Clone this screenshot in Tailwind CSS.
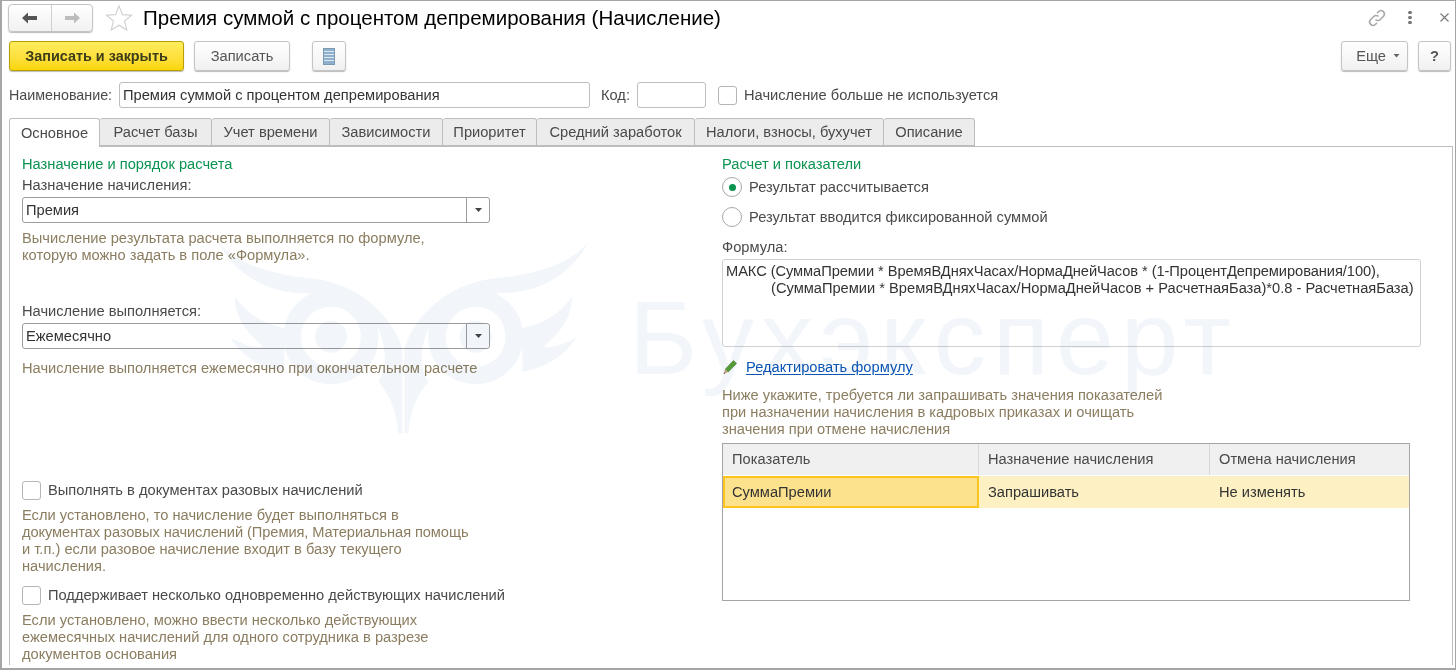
<!DOCTYPE html>
<html lang="ru">
<head>
<meta charset="utf-8">
<script src="https://cdn.jsdelivr.net/npm/@tailwindcss/browser@4"></script>
<title>Премия</title>
</head>
<body class="m-0 bg-white">
<div class="relative w-[1456px] h-[670px] overflow-hidden bg-white border border-l-2 border-b-2 border-[#a5a5a5] font-['Liberation_Sans',Arial,sans-serif] text-[14.67px] leading-[17px] text-[#333]">

  <!-- title bar -->
  <div class="flex items-center h-[33px]">
    <div class="flex ml-[6px] w-[85px] h-[28px] rounded-[4px] border border-[#c4c4c4] bg-gradient-to-b from-white to-[#f1f1f1] shadow-[0_1px_1px_#bbb]">
      <div class="w-[43px] flex items-center justify-center border-r border-[#d0d0d0]">
        <svg width="16" height="12" viewBox="0 0 16 12"><path d="M0 6 L6 0.5 V4 H15 V8 H6 V11.5 Z" fill="#555"/></svg>
      </div>
      <div class="flex-1 flex items-center justify-center">
        <svg width="16" height="12" viewBox="0 0 16 12"><path d="M16 6 L10 0.5 V4 H1 V8 H10 V11.5 Z" fill="#bdbdbd"/></svg>
      </div>
    </div>
    <svg class="ml-[12px]" width="28" height="28" viewBox="0 0 28 28"><path d="M14 2 L17.5 10.6 L26.5 11.2 L19.6 17 L21.8 26 L14 21.2 L6.2 26 L8.4 17 L1.5 11.2 L10.5 10.6 Z" fill="#fff" stroke="#d0d0d0" stroke-width="1.1"/></svg>
    <div class="ml-[10px] text-[20.5px] leading-[24px] text-black whitespace-nowrap">Премия суммой с процентом депремирования (Начисление)</div>
    <div class="ml-auto flex items-center">
      <svg width="20" height="20" viewBox="0 0 20 20" fill="none" stroke="#a8a8a8" stroke-width="1.6"><path d="M8.5 11.5 a3.4 3.4 0 0 0 4.8 0 l3.2-3.2 a3.4 3.4 0 0 0-4.8-4.8 l-1.6 1.6"/><path d="M11.5 8.5 a3.4 3.4 0 0 0-4.8 0 l-3.2 3.2 a3.4 3.4 0 0 0 4.8 4.8 l1.6-1.6"/></svg>
      <div class="ml-[21px] flex flex-col gap-[2px]"><span class="block w-[4px] h-[3px] rounded-full bg-[#777]"></span><span class="block w-[4px] h-[3px] rounded-full bg-[#777]"></span><span class="block w-[4px] h-[3px] rounded-full bg-[#777]"></span></div>
      <svg class="ml-[28px] mr-[6px]" width="9" height="9" viewBox="0 0 9 9" stroke="#777" stroke-width="1.1"><path d="M0.5 0.5 L8.5 8.5 M8.5 0.5 L0.5 8.5"/></svg>
    </div>
  </div>

  <!-- command bar -->
  <div class="flex items-start h-[30px] mt-[7px] pl-[7px] pr-[4px]">
    <div class="w-[175px] h-[30px] rounded-[3px] border border-[#b9a000] bg-gradient-to-b from-[#ffec5c] to-[#fbd600] shadow-[0_1px_1px_#bbb] flex items-center justify-center font-bold text-[14.4px] text-[#3d3d1a]">Записать и закрыть</div>
    <div class="ml-[10px] w-[96px] h-[30px] rounded-[3px] border border-[#c4c4c4] bg-gradient-to-b from-white to-[#f1f1f1] shadow-[0_1px_1px_#bbb] flex items-center justify-center text-[#555]">Записать</div>
    <div class="ml-[22px] w-[34px] h-[30px] rounded-[3px] border border-[#c4c4c4] bg-gradient-to-b from-white to-[#f1f1f1] shadow-[0_1px_1px_#bbb] flex items-center justify-center">
      <svg width="12" height="17" viewBox="0 0 12 17"><rect x="0.5" y="0.5" width="11" height="16" fill="#8fb0cc" stroke="#7d9ab3"/><path d="M1 3.5H11M1 6.5H11M1 9.5H11M1 12.5H11" stroke="#dce7ef"/></svg>
    </div>
    <div class="ml-auto w-[67px] h-[30px] rounded-[3px] border border-[#c4c4c4] bg-gradient-to-b from-white to-[#f1f1f1] shadow-[0_1px_1px_#bbb] flex items-center justify-end pr-[7px] text-[#555]">Еще<svg class="ml-[7px]" width="7" height="4" viewBox="0 0 7 4"><path d="M0.5 0 H6.5 L3.5 3.5Z" fill="#666"/></svg></div>
    <div class="ml-[10px] w-[33px] h-[30px] rounded-[3px] border border-[#c4c4c4] bg-gradient-to-b from-white to-[#f1f1f1] shadow-[0_1px_1px_#bbb] flex items-center justify-center font-bold text-[#555]">?</div>
  </div>

  <!-- name row -->
  <div class="flex items-center h-[26px] mt-[11px] pl-[7px] text-[#4a4a4a]">
    <span class="w-[110px] whitespace-nowrap text-[14.3px]">Наименование:</span>
    <div class="w-[471px] h-[26px] rounded-[3px] border border-[#bdbdbd] bg-white flex items-center pl-[3px] text-[#333] whitespace-nowrap">Премия суммой с процентом депремирования</div>
    <span class="ml-[11px] w-[36px]">Код:</span>
    <div class="w-[69px] h-[26px] rounded-[3px] border border-[#bdbdbd] bg-white"></div>
    <div class="ml-[12px] w-[19px] h-[19px] rounded-[3px] border border-[#b5b5b5] bg-white"></div>
    <span class="ml-[7px] whitespace-nowrap">Начисление больше не используется</span>
  </div>

  <!-- tabs -->
  <div class="relative z-10 flex h-[29px] mt-[10px] ml-[7px] -mb-px text-[#4a4a4a]">
    <div class="w-[91px] h-[29px] flex items-center justify-center rounded-t-[3px] border border-b-0 border-[#bdbdbd] bg-white">Основное</div>
    <div class="w-[112px] h-[28px] flex items-center justify-center rounded-t-[3px] border border-l-0 border-[#bdbdbd] bg-[#ececec]">Расчет базы</div>
    <div class="w-[118px] h-[28px] flex items-center justify-center rounded-t-[3px] border border-l-0 border-[#bdbdbd] bg-[#ececec]">Учет времени</div>
    <div class="w-[113px] h-[28px] flex items-center justify-center rounded-t-[3px] border border-l-0 border-[#bdbdbd] bg-[#ececec]">Зависимости</div>
    <div class="w-[94px] h-[28px] flex items-center justify-center rounded-t-[3px] border border-l-0 border-[#bdbdbd] bg-[#ececec]">Приоритет</div>
    <div class="w-[158px] h-[28px] flex items-center justify-center rounded-t-[3px] border border-l-0 border-[#bdbdbd] bg-[#ececec]">Средний заработок</div>
    <div class="w-[189px] h-[28px] flex items-center justify-center rounded-t-[3px] border border-l-0 border-[#bdbdbd] bg-[#ececec]">Налоги, взносы, бухучет</div>
    <div class="w-[91px] h-[28px] flex items-center justify-center rounded-t-[3px] border border-l-0 border-[#bdbdbd] bg-[#ececec]">Описание</div>
  </div>

  <!-- panel -->
  <div class="flex h-[519px] ml-[7px] w-[1444px] border border-b-0 border-[#bdbdbd] text-[#4a4a4a]">
    <!-- left -->
    <div class="w-[712px] pl-[12px] pt-[9px]">
      <div class="text-[#0b9350]">Назначение и порядок расчета</div>
      <div class="mt-[4px]">Назначение начисления:</div>
      <div class="mt-[3px] flex w-[468px] h-[26px] rounded-[3px] border border-[#9c9c9c]">
        <div class="flex-1 flex items-center pl-[3px] text-[#333]">Премия</div>
        <div class="w-[23px] border-l border-[#9c9c9c] flex items-center justify-center"><svg width="7" height="4" viewBox="0 0 7 4"><path d="M0 0 H7 L3.5 4Z" fill="#444"/></svg></div>
      </div>
      <div class="mt-[7px] text-[#8b7d60]">Вычисление результата расчета выполняется по формуле,<br>которую можно задать в поле «Формула».</div>
      <div class="mt-[39px]">Начисление выполняется:</div>
      <div class="mt-[3px] flex w-[468px] h-[26px] rounded-[3px] border border-[#9c9c9c]">
        <div class="flex-1 flex items-center pl-[3px] text-[#333]">Ежемесячно</div>
        <div class="w-[23px] border-l border-[#9c9c9c] flex items-center justify-center"><svg width="7" height="4" viewBox="0 0 7 4"><path d="M0 0 H7 L3.5 4Z" fill="#444"/></svg></div>
      </div>
      <div class="mt-[11px] text-[#8b7d60]">Начисление выполняется ежемесячно при окончательном расчете</div>
      <div class="mt-[104px] flex items-center h-[19px]">
        <div class="w-[19px] h-[19px] rounded-[3px] border border-[#b5b5b5] bg-white"></div>
        <span class="ml-[7px]">Выполнять в документах разовых начислений</span>
      </div>
      <div class="mt-[7px] text-[#8b7d60]">Если установлено, то начисление будет выполняться в<br><span class="tracking-[-0.09px]">документах разовых начислений (Премия, Материальная помощь</span><br>и т.п.) если разовое начисление входит в базу текущего<br>начисления.</div>
      <div class="mt-[11px] flex items-center h-[19px]">
        <div class="w-[19px] h-[19px] rounded-[3px] border border-[#b5b5b5] bg-white"></div>
        <span class="ml-[7px]">Поддерживает несколько одновременно действующих начислений</span>
      </div>
      <div class="mt-[7px] text-[#8b7d60]">Если установлено, можно ввести несколько действующих<br>ежемесячных начислений для одного сотрудника в разрезе<br>документов основания</div>
    </div>
    <!-- right -->
    <div class="flex-1 pt-[9px]">
      <div class="text-[#0b9350]">Расчет и показатели</div>
      <div class="mt-[4px] flex items-center h-[20px]">
        <div class="w-[20px] h-[20px] rounded-full border border-[#a8a8a8] bg-white flex items-center justify-center"><span class="block w-[7px] h-[7px] rounded-full bg-[#0b9350]"></span></div>
        <span class="ml-[7px]">Результат рассчитывается</span>
      </div>
      <div class="mt-[10px] flex items-center h-[20px]">
        <div class="w-[20px] h-[20px] rounded-full border border-[#a8a8a8] bg-white"></div>
        <span class="ml-[7px]">Результат вводится фиксированной суммой</span>
      </div>
      <div class="mt-[12px]">Формула:</div>
      <div class="mt-[3px] w-[699px] h-[88px] rounded-[3px] border border-[#d0d0d0] pl-[3px] pt-[3px] text-[#333] whitespace-nowrap"><span class="tracking-[-0.07px]">МАКС (СуммаПремии * ВремяВДняхЧасах/НормаДнейЧасов * (1-ПроцентДепремирования/100),</span><br><span class="ml-[45px]">(СуммаПремии * ВремяВДняхЧасах/НормаДнейЧасов + РасчетнаяБаза)*0.8 - РасчетнаяБаза)</span></div>
      <div class="mt-[11px] flex items-center h-[18px]">
        <svg width="16" height="16" viewBox="0 0 16 16"><path d="M3.2 10.2 L11.5 1.6 L14.6 4.4 L6.2 13 Z" fill="#5aa13a" stroke="#3f7d2a" stroke-width="0.6"/><path d="M3.2 10.2 L6.2 13 L1.6 15 Z" fill="#c9a97a"/><path d="M1.6 15 L2.2 13.4 L3.2 14.4Z" fill="#444"/></svg>
        <a class="ml-[8px] text-[#0b56b5] underline underline-offset-2">Редактировать формулу</a>
      </div>
      <div class="mt-[11px] text-[#8b7d60]">Ниже укажите, требуется ли запрашивать значения показателей<br>при назначении начисления в кадровых приказах и очищать<br>значения при отмене начисления</div>
      <div class="mt-[5px] w-[688px] h-[158px] border border-[#a5a5a5]">
        <div class="flex h-[32px] bg-[#f0f0f0] border-b border-white">
          <div class="w-[256px] pl-[9px] flex items-center border-r border-[#d8d8d8]">Показатель</div>
          <div class="w-[231px] pl-[9px] flex items-center border-r border-[#d8d8d8]">Назначение начисления</div>
          <div class="flex-1 pl-[9px] flex items-center">Отмена начисления</div>
        </div>
        <div class="flex h-[32px] bg-[#fdf1c4] text-[#333]">
          <div class="w-[256px] pl-[7px] flex items-center bg-[#fde28e] border-2 border-[#fcc41e]">СуммаПремии</div>
          <div class="w-[231px] pl-[9px] flex items-center">Запрашивать</div>
          <div class="flex-1 pl-[9px] flex items-center">Не изменять</div>
        </div>
      </div>
    </div>
  </div>

  <!-- watermark -->
  <svg class="absolute left-[188px] top-[224px] pointer-events-none mix-blend-multiply" width="430" height="240" viewBox="0 0 1290 720" fill="#f2f6fa">
    <g>
      <circle cx="423" cy="335" r="48"/>
      <circle cx="423" cy="335" r="116" fill="none" stroke="#f2f6fa" stroke-width="53"/>
      <path d="M85 50 C140 120 250 150 380 162 C500 180 600 260 637 370 L637 625 L625 625 C620 560 600 510 565 470 C590 430 592 380 565 310 C520 250 440 210 355 205 C220 205 130 140 85 50Z"/>
      <path d="M135 215 C170 265 215 295 285 310 L282 440 C220 430 160 400 120 337 C160 360 190 368 220 365 C170 325 130 270 135 215Z"/>
    </g>
    <g transform="translate(1280 0) scale(-1 1)">
      <circle cx="423" cy="335" r="48"/>
      <circle cx="423" cy="335" r="116" fill="none" stroke="#f2f6fa" stroke-width="53"/>
      <path d="M85 50 C140 120 250 150 380 162 C500 180 600 260 637 370 L637 625 L625 625 C620 560 600 510 565 470 C590 430 592 380 565 310 C520 250 440 210 355 205 C220 205 130 140 85 50Z"/>
      <path d="M135 215 C170 265 215 295 285 310 L282 440 C220 430 160 400 120 337 C160 360 190 368 220 365 C170 325 130 270 135 215Z"/>
    </g>
  </svg>
  <div class="absolute left-[627px] top-[280px] pointer-events-none mix-blend-multiply text-[104px] leading-[115px] tracking-[7px] text-[#f2f6fa] whitespace-nowrap">Бухэксперт</div>
</div>
</body>
</html>
